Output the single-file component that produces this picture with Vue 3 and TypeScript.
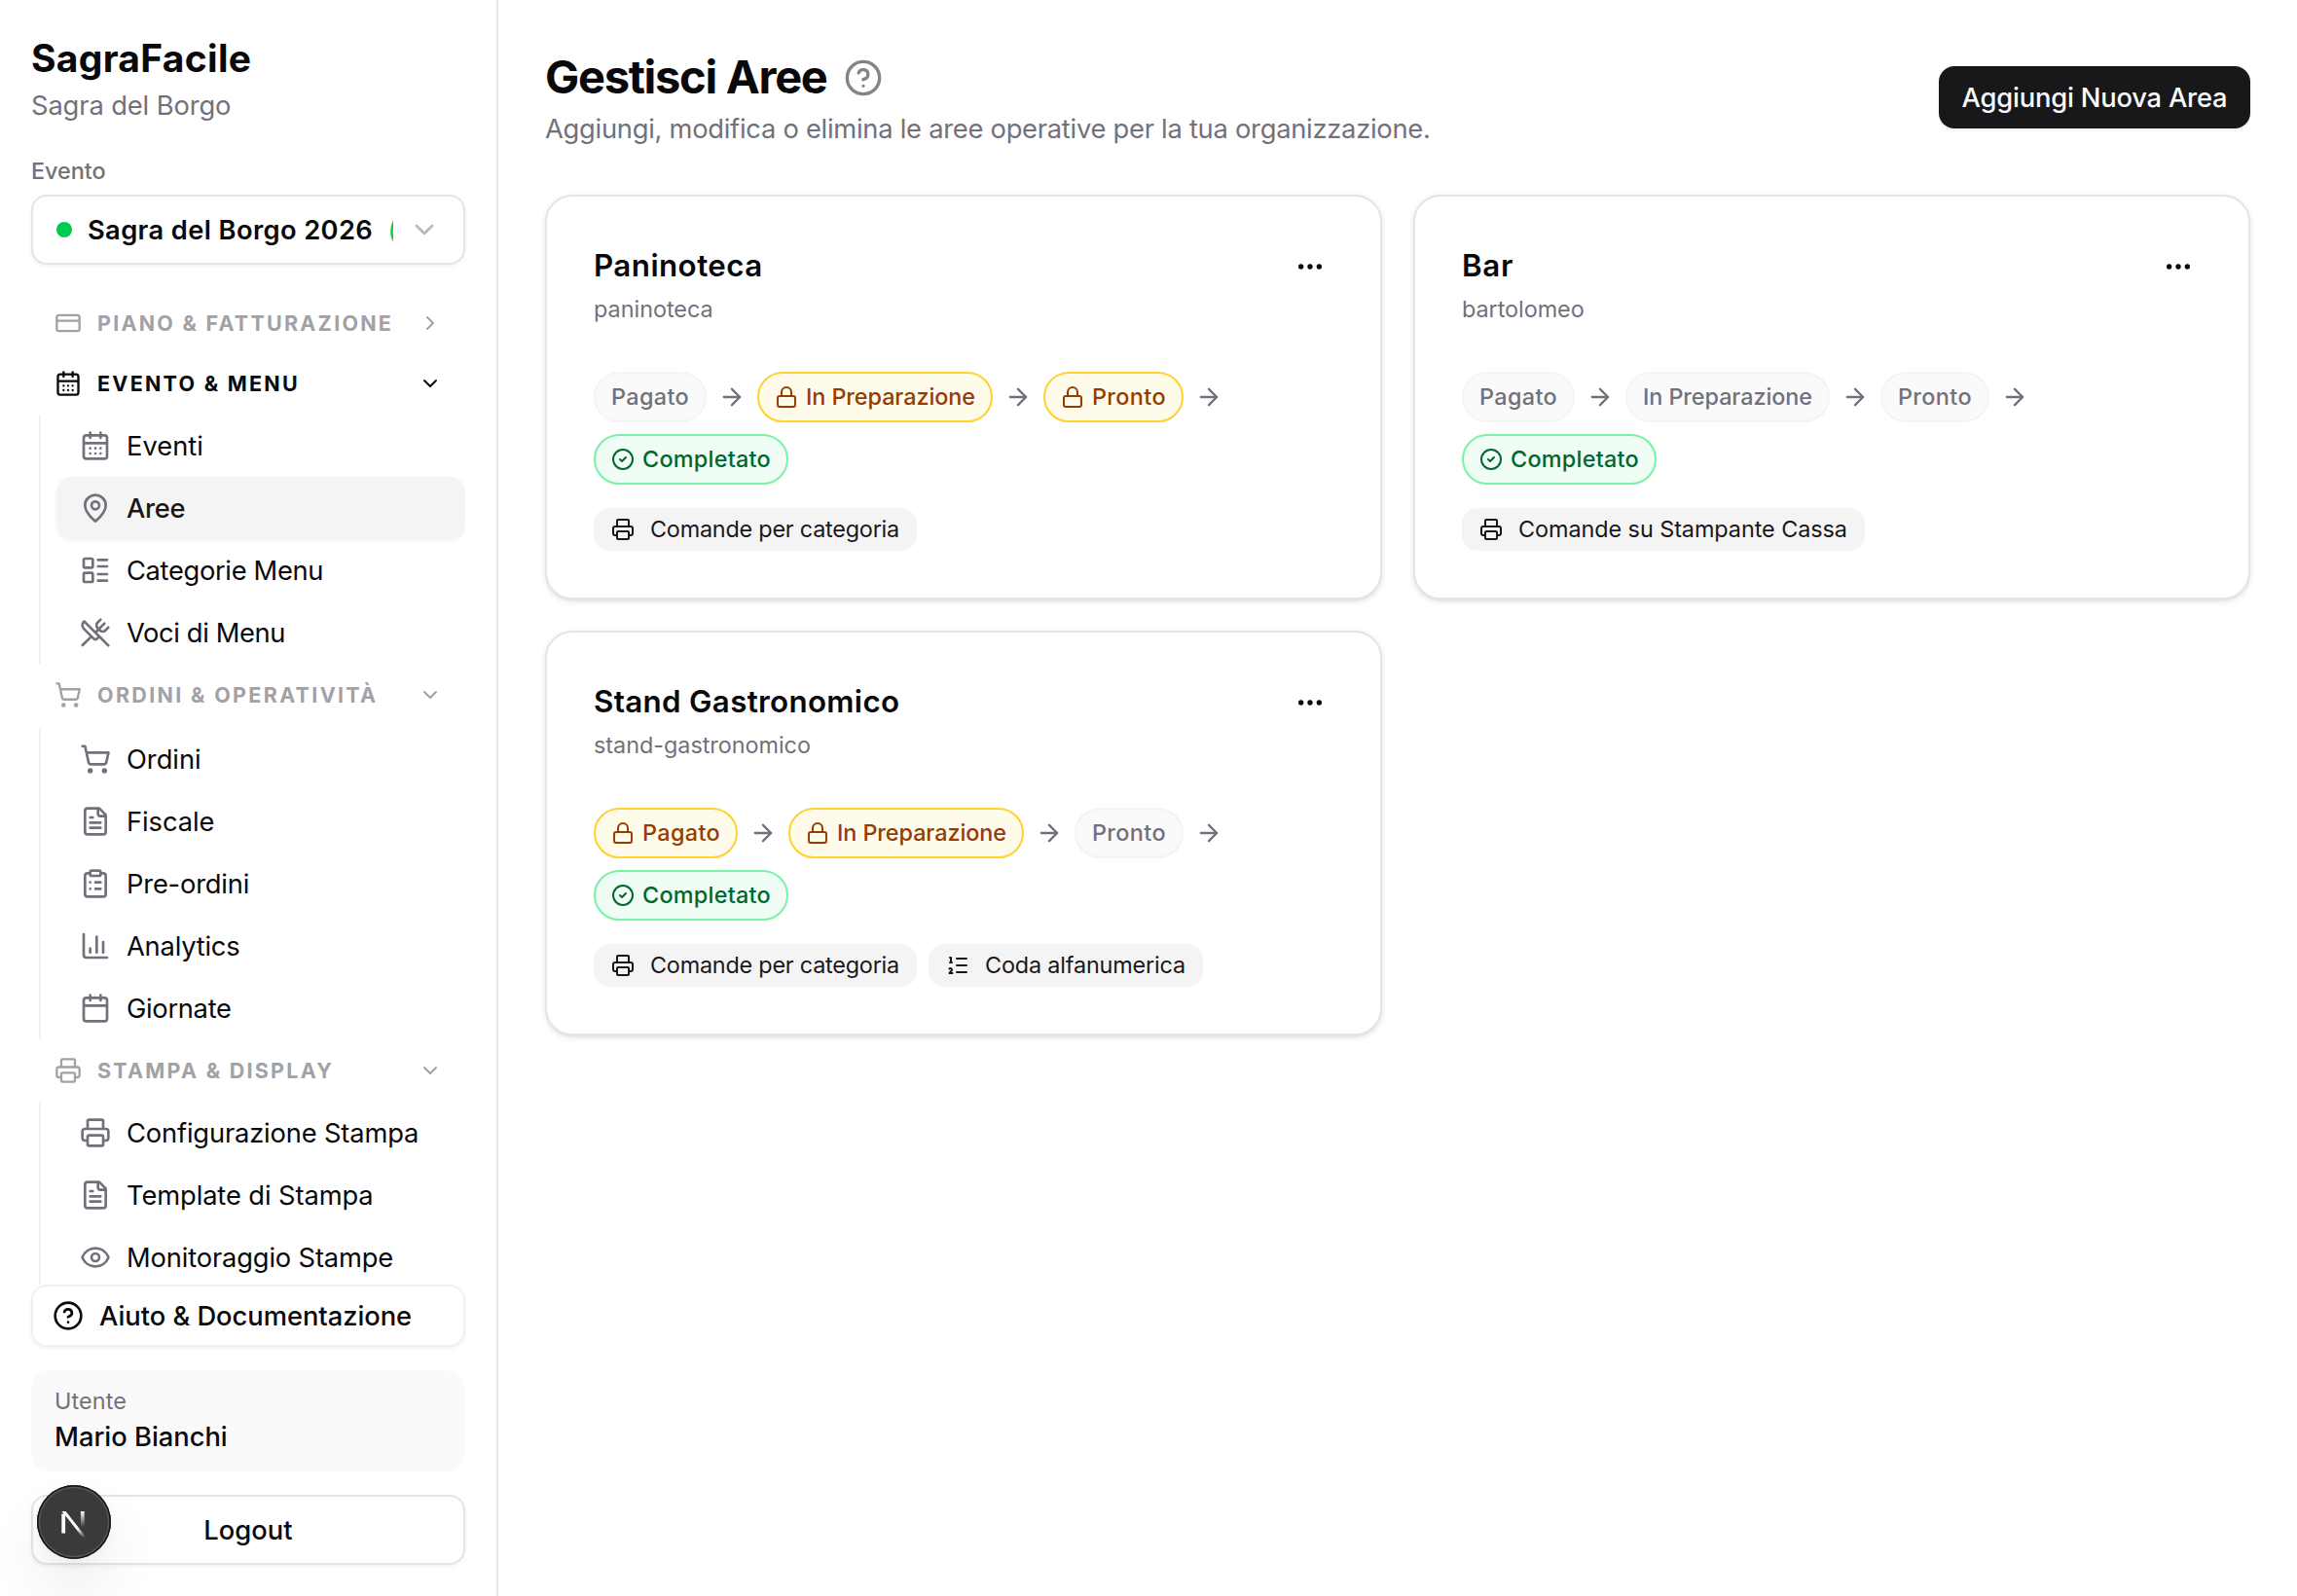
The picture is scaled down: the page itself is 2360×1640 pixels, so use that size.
<script setup lang="ts">
import { h } from 'vue'
import type { FunctionalComponent } from 'vue'

type IconName =
  | 'card' | 'calendarDays' | 'pin' | 'layout' | 'utensils' | 'cart' | 'file' | 'clipboard'
  | 'chart' | 'calendar' | 'printer' | 'eye' | 'help' | 'down' | 'right' | 'arrow'
  | 'lock' | 'check' | 'ordered' | 'more'

const cal = 'M8 2v4M16 2v4M5 4h14a2 2 0 0 1 2 2v14a2 2 0 0 1-2 2H5a2 2 0 0 1-2-2V6a2 2 0 0 1 2-2ZM3 10h18'
const ring = 'M2 12a10 10 0 1 0 20 0a10 10 0 1 0-20 0'

const paths: Record<IconName, string> = {
  card: 'M4 5h16a2 2 0 0 1 2 2v10a2 2 0 0 1-2 2H4a2 2 0 0 1-2-2V7a2 2 0 0 1 2-2ZM2 10h20',
  calendarDays: cal + 'M8 14h.01M12 14h.01M16 14h.01M8 18h.01M12 18h.01M16 18h.01',
  calendar: cal,
  pin: 'M20 10c0 4.993-5.539 10.193-7.399 11.799a1 1 0 0 1-1.202 0C9.539 20.193 4 14.993 4 10a8 8 0 0 1 16 0M9 10a3 3 0 1 0 6 0a3 3 0 1 0-6 0',
  layout: 'M4 3h5a1 1 0 0 1 1 1v5a1 1 0 0 1-1 1H4a1 1 0 0 1-1-1V4a1 1 0 0 1 1-1ZM4 14h5a1 1 0 0 1 1 1v5a1 1 0 0 1-1 1H4a1 1 0 0 1-1-1v-5a1 1 0 0 1 1-1ZM14 4h7M14 9h7M14 15h7M14 20h7',
  utensils: 'm16 2-2.3 2.3a3 3 0 0 0 0 4.2l1.8 1.8a3 3 0 0 0 4.2 0L22 8M15 15 3.3 3.3a4.2 4.2 0 0 0 0 6l7.3 7.3c.7.7 2 .7 2.8 0L15 15Zm0 0 7 7M2.1 21.8l6.4-6.3M19 5l-7 7',
  cart: 'M7 21a1 1 0 1 0 2 0a1 1 0 1 0-2 0M18 21a1 1 0 1 0 2 0a1 1 0 1 0-2 0M2.05 2.05h2l2.66 12.42a2 2 0 0 0 2 1.58h9.78a2 2 0 0 0 1.95-1.57l1.65-7.43H5.12',
  file: 'M15 2H6a2 2 0 0 0-2 2v16a2 2 0 0 0 2 2h12a2 2 0 0 0 2-2V7ZM14 2v4a2 2 0 0 0 2 2h4M10 9H8M16 13H8M16 17H8',
  clipboard: 'M9 2h6a1 1 0 0 1 1 1v2a1 1 0 0 1-1 1H9a1 1 0 0 1-1-1V3a1 1 0 0 1 1-1ZM16 4h2a2 2 0 0 1 2 2v14a2 2 0 0 1-2 2H6a2 2 0 0 1-2-2V6a2 2 0 0 1 2-2h2M12 11h4M12 16h4M8 11h.01M8 16h.01',
  chart: 'M3 3v16a2 2 0 0 0 2 2h16M18 17V9M13 17V5M8 17v-3',
  printer: 'M6 18H4a2 2 0 0 1-2-2v-5a2 2 0 0 1 2-2h16a2 2 0 0 1 2 2v5a2 2 0 0 1-2 2h-2M6 9V3a1 1 0 0 1 1-1h10a1 1 0 0 1 1 1v6M7 14h10a1 1 0 0 1 1 1v6a1 1 0 0 1-1 1H7a1 1 0 0 1-1-1v-6a1 1 0 0 1 1-1Z',
  eye: 'M2.062 12.348a1 1 0 0 1 0-.696 10.75 10.75 0 0 1 19.876 0 1 1 0 0 1 0 .696 10.75 10.75 0 0 1-19.876 0M9 12a3 3 0 1 0 6 0a3 3 0 1 0-6 0',
  help: ring + 'M9.09 9a3 3 0 0 1 5.83 1c0 2-3 3-3 3M12 17h.01',
  down: 'm6 9 6 6 6-6',
  right: 'm9 18 6-6-6-6',
  arrow: 'M5 12h14M12 5l7 7-7 7',
  lock: 'M5 11h14a2 2 0 0 1 2 2v7a2 2 0 0 1-2 2H5a2 2 0 0 1-2-2v-7a2 2 0 0 1 2-2ZM7 11V7a5 5 0 0 1 10 0v4',
  check: ring + 'M9 12l2 2 4-4',
  ordered: 'M11 5h10M11 12h10M11 19h10M4 4h1v5M4 9h2M6.5 20H3.4c0-1 2.6-1.925 2.6-3.5a1.5 1.5 0 0 0-2.6-1.02',
  more: 'M11 12a1 1 0 1 0 2 0a1 1 0 1 0-2 0M18 12a1 1 0 1 0 2 0a1 1 0 1 0-2 0M4 12a1 1 0 1 0 2 0a1 1 0 1 0-2 0',
}

const Icon: FunctionalComponent<{ name: IconName; size: number }> = (props) =>
  h('svg', {
    width: props.size, height: props.size, viewBox: '0 0 24 24', fill: 'none',
    stroke: 'currentColor', 'stroke-width': 2, 'stroke-linecap': 'round', 'stroke-linejoin': 'round',
    'aria-hidden': 'true',
  }, [h('path', { d: paths[props.name] })])
Icon.props = ['name', 'size']

interface Label { text: string; tracking: number }
interface NavItem extends Label { icon: IconName; active?: boolean }
interface NavGroup extends Label { key: string; icon: IconName; current?: boolean; items: NavItem[] }

const spacing = (l: Label) => ({ letterSpacing: `${l.tracking}px` })

const groups: NavGroup[] = [
  { key: 'piano', text: 'PIANO & FATTURAZIONE', tracking: 2.24, icon: 'card', items: [] },
  {
    key: 'evento', text: 'EVENTO & MENU', tracking: 2.26, icon: 'calendarDays', current: true,
    items: [
      { text: 'Eventi', tracking: 0.02, icon: 'calendarDays' },
      { text: 'Aree', tracking: -0.3, icon: 'pin', active: true },
      { text: 'Categorie Menu', tracking: -0.33, icon: 'layout' },
      { text: 'Voci di Menu', tracking: -0.38, icon: 'utensils' },
    ],
  },
  {
    key: 'ordini', text: 'ORDINI & OPERATIVITÀ', tracking: 2.32, icon: 'cart',
    items: [
      { text: 'Ordini', tracking: -0.03, icon: 'cart' },
      { text: 'Fiscale', tracking: -0.07, icon: 'file' },
      { text: 'Pre-ordini', tracking: -0.19, icon: 'clipboard' },
      { text: 'Analytics', tracking: -0.22, icon: 'chart' },
      { text: 'Giornate', tracking: -0.31, icon: 'calendar' },
    ],
  },
  {
    key: 'stampa', text: 'STAMPA & DISPLAY', tracking: 2.25, icon: 'printer',
    items: [
      { text: 'Configurazione Stampa', tracking: -0.16, icon: 'printer' },
      { text: 'Template di Stampa', tracking: -0.1, icon: 'file' },
      { text: 'Monitoraggio Stampe', tracking: -0.15, icon: 'eye' },
    ],
  },
]

type Tone = 'muted' | 'locked' | 'done'
interface Step extends Label { tone: Tone }
interface Tag extends Label { icon: IconName }
interface Area { name: Label; slug: Label; steps: Step[]; tags: Tag[] }

const pagato = (tone: Tone): Step => ({ text: 'Pagato', tracking: 0.36, tone })
const preparazione = (tone: Tone): Step => ({ text: 'In Preparazione', tracking: -0.08, tone })
const pronto = (tone: Tone): Step => ({ text: 'Pronto', tracking: 0.39, tone })
const completato: Step = { text: 'Completato', tracking: 0.26, tone: 'done' }
const perCategoria: Tag = { text: 'Comande per categoria', tracking: -0.22, icon: 'printer' }

const areas: Area[] = [
  {
    name: { text: 'Paninoteca', tracking: 0.45 }, slug: { text: 'paninoteca', tracking: -0.01 },
    steps: [pagato('muted'), preparazione('locked'), pronto('locked'), completato],
    tags: [perCategoria],
  },
  {
    name: { text: 'Bar', tracking: 0.7 }, slug: { text: 'bartolomeo', tracking: -0.05 },
    steps: [pagato('muted'), preparazione('muted'), pronto('muted'), completato],
    tags: [{ text: 'Comande su Stampante Cassa', tracking: -0.06, icon: 'printer' }],
  },
  {
    name: { text: 'Stand Gastronomico', tracking: 0.33 }, slug: { text: 'stand-gastronomico', tracking: -0.03 },
    steps: [pagato('locked'), preparazione('locked'), pronto('muted'), completato],
    tags: [perCategoria, { text: 'Coda alfanumerica', tracking: -0.16, icon: 'ordered' }],
  },
]
</script>

<template>
  <div class="app">
    <aside class="sidebar">
      <div class="brand">SagraFacile</div>
      <div class="org">Sagra del Borgo</div>
      <div class="event-label">Evento</div>
      <button class="select" type="button">
        <span class="select-value">
          <span class="dot"></span>
          <span class="select-text">Sagra del Borgo 2026</span>
          <span class="select-state">(</span>
        </span>
        <Icon class="select-chevron" name="down" :size="32" />
      </button>

      <nav class="nav">
        <section v-for="g in groups" :key="g.key" :class="['group', `group-${g.key}`]">
          <div :class="['group-head', { current: g.current }]">
            <Icon :name="g.icon" :size="28" />
            <span class="group-title" :style="spacing(g)">{{ g.text }}</span>
            <Icon class="group-chevron" :name="g.items.length ? 'down' : 'right'" :size="24" />
          </div>
          <div v-if="g.items.length" class="group-items">
            <a v-for="item in g.items" :key="item.text" :class="['item', { active: item.active }]">
              <Icon class="item-icon" :name="item.icon" :size="32" />
              <span class="item-text" :style="spacing(item)">{{ item.text }}</span>
            </a>
          </div>
        </section>
      </nav>

      <a class="help-link">
        <Icon name="help" :size="32" />
        <span class="item-text">Aiuto &amp; Documentazione</span>
      </a>
      <div class="user">
        <div class="user-label">Utente</div>
        <div class="user-name">Mario Bianchi</div>
      </div>
      <button class="logout" type="button">Logout</button>
    </aside>

    <main class="main">
      <header class="header">
        <div>
          <div class="title-row">
            <h1>Gestisci Aree</h1>
            <Icon class="title-help" name="help" :size="40" />
          </div>
          <p class="lead">Aggiungi, modifica o elimina le aree operative per la tua organizzazione.</p>
        </div>
        <button class="primary" type="button">Aggiungi Nuova Area</button>
      </header>

      <div class="cards">
        <article v-for="a in areas" :key="a.slug.text" class="card">
          <div class="card-head">
            <div>
              <h2 :style="spacing(a.name)">{{ a.name.text }}</h2>
              <div class="slug" :style="spacing(a.slug)">{{ a.slug.text }}</div>
            </div>
            <span class="more"><Icon name="more" :size="32" /></span>
          </div>
          <div class="steps">
            <template v-for="(s, i) in a.steps" :key="s.text">
              <Icon v-if="i > 0" class="step-arrow" name="arrow" :size="28" />
              <span :class="['step', s.tone]">
                <Icon v-if="s.tone === 'locked'" name="lock" :size="24" />
                <Icon v-if="s.tone === 'done'" name="check" :size="24" />
                <span :style="spacing(s)">{{ s.text }}</span>
              </span>
            </template>
          </div>
          <div class="tags">
            <span v-for="t in a.tags" :key="t.text" class="tag">
              <Icon :name="t.icon" :size="24" />
              <span :style="spacing(t)">{{ t.text }}</span>
            </span>
          </div>
        </article>
      </div>
    </main>

    <div class="dev-badge">
      <svg width="76" height="76" viewBox="0 0 76 76" fill="none" aria-hidden="true">
        <defs>
          <linearGradient id="diag" x1="38" y1="40" x2="49" y2="54" gradientUnits="userSpaceOnUse">
            <stop offset="0.3" stop-color="#fff" />
            <stop offset="1" stop-color="#fff" stop-opacity="0" />
          </linearGradient>
          <linearGradient id="stem" x1="47" y1="27" x2="47" y2="43" gradientUnits="userSpaceOnUse">
            <stop stop-color="#fff" />
            <stop offset="1" stop-color="#fff" stop-opacity="0" />
          </linearGradient>
        </defs>
        <path d="M27.2 49.5V29.5" stroke="#fff" stroke-width="3.8" />
        <path d="M25.3 27H29.6L50 53L47.6 54.8L28.9 31Z" fill="url(#diag)" />
        <path d="M46.8 27V43" stroke="url(#stem)" stroke-width="3.8" />
      </svg>
    </div>
  </div>
</template>

<style>
body {
  background: #fff;
}
</style>

<style scoped>
.app {
  position: relative;
  display: flex;
  width: 2360px;
  height: 1640px;
  overflow: hidden;
  background: #fff;
  color: #09090b;
  font-family: Inter, "Liberation Sans", sans-serif;
  font-size: 27.3px;
  line-height: 40px;
}
.app *,
.app *::before {
  box-sizing: border-box;
}
svg {
  display: block;
  flex: none;
}
button {
  font: inherit;
  color: inherit;
  margin: 0;
}
h1,
h2,
p {
  margin: 0;
}
span,
.brand,
.org,
h1,
h2,
.lead {
  white-space: nowrap;
}

.sidebar {
  display: flex;
  flex-direction: column;
  flex: none;
  width: 512px;
  padding: 32px;
  border-right: 2px solid #e4e4e7;
}
.brand {
  font-size: 39px;
  line-height: 56px;
  font-weight: 700;
  letter-spacing: 0.3px;
}
.org {
  margin-top: 1px;
  color: #71717b;
  letter-spacing: -0.11px;
}
.event-label {
  margin: 31px 0 8px;
  font-size: 23.4px;
  line-height: 32px;
  font-weight: 500;
  letter-spacing: -0.05px;
  color: #71717b;
}
.select {
  display: flex;
  align-items: center;
  justify-content: space-between;
  flex: none;
  height: 72px;
  padding: 0 24px;
  border: 2px solid #e4e4e7;
  border-radius: 16px;
  background: #fff;
  box-shadow: 0 2px 4px rgba(0, 0, 0, 0.05);
}
.select-value {
  display: flex;
  align-items: center;
  width: 346px;
  overflow: hidden;
}
.dot {
  flex: none;
  width: 16px;
  height: 16px;
  margin-right: 16px;
  border-radius: 50%;
  background: #00c950;
}
.select-text {
  padding-top: 2px;
  font-weight: 600;
  letter-spacing: 0.37px;
}
.select-state {
  margin-left: 15px;
  padding-top: 2px;
  color: #00c950;
}
.select-chevron {
  color: #71717b;
  opacity: 0.5;
}

.nav {
  flex: 1;
  min-height: 0;
  margin-top: 28px;
  overflow: hidden;
}
.group-head {
  display: flex;
  align-items: center;
  height: 64px;
  padding: 0 24px;
  color: #a1a1a6;
}
.group-head.current {
  color: #09090b;
}
.group-piano .group-head {
  height: 62px;
  padding-top: 2px;
}
.group-ordini .group-head {
  margin-bottom: 2px;
}
.group-title {
  flex: 1;
  margin-left: 16px;
  font-size: 21.5px;
  font-weight: 700;
}
.group-items {
  margin-left: 8px;
  padding-left: 16px;
  border-left: 2px solid #f1f1f2;
}
.item {
  display: flex;
  align-items: center;
  gap: 16px;
  height: 64px;
  padding: 0 24px;
  border-radius: 16px;
}
.item.active {
  background: #f4f4f5;
  color: #18181b;
  font-weight: 500;
  box-shadow: 0 2px 4px rgba(0, 0, 0, 0.05);
}
.item-icon {
  color: #71717b;
}
.item-text {
  padding-top: 2px;
}

.help-link {
  display: flex;
  align-items: center;
  flex: none;
  gap: 16px;
  height: 64px;
  padding: 0 20px;
  border: 2px solid #f0f0f1;
  border-radius: 16px;
  background: #fff;
  box-shadow: 0 2px 4px rgba(0, 0, 0, 0.05);
  font-weight: 500;
  letter-spacing: -0.03px;
}
.user {
  flex: none;
  height: 104px;
  margin: 24px 0;
  padding: 16px 24px;
  border-radius: 20px;
  background: #fafafa;
}
.user-label {
  font-size: 23.4px;
  line-height: 32px;
  letter-spacing: 0.12px;
  color: #71717b;
}
.user-name {
  margin-top: 1px;
  font-weight: 500;
}
.logout {
  flex: none;
  height: 72px;
  padding: 2px 0 0;
  border: 2px solid #e4e4e7;
  border-radius: 16px;
  background: #fff;
  box-shadow: 0 2px 4px rgba(0, 0, 0, 0.05);
  font-weight: 500;
  letter-spacing: 0.05px;
}

.main {
  flex: 1;
  padding: 48px;
}
.header {
  display: flex;
  align-items: center;
  justify-content: space-between;
  height: 104px;
}
.title-row {
  display: flex;
  align-items: center;
  gap: 17px;
  height: 64px;
}
h1 {
  font-size: 47px;
  line-height: 62px;
  font-weight: 700;
  letter-spacing: -1.3px;
  margin-bottom: 2px;
}
.title-help {
  color: #838388;
}
.lead {
  height: 40px;
  padding-top: 1px;
  color: #71717b;
  letter-spacing: -0.255px;
}
.primary {
  width: 320px;
  height: 64px;
  padding: 2px 0 0;
  border: 0;
  border-radius: 16px;
  background: #18181b;
  color: #fafafa;
  box-shadow: 0 2px 4px rgba(0, 0, 0, 0.05);
  font-weight: 500;
  letter-spacing: -0.18px;
}

.cards {
  display: grid;
  grid-template-columns: 1fr 1fr;
  gap: 32px;
  margin-top: 48px;
}
.card {
  height: 416px;
  padding: 48px;
  border: 2px solid #e4e4e7;
  border-radius: 28px;
  background: #fff;
  box-shadow: 0 2px 6px rgba(0, 0, 0, 0.1), 0 2px 4px -2px rgba(0, 0, 0, 0.1);
}
.card-head {
  display: flex;
  justify-content: space-between;
  height: 84px;
}
h2 {
  padding-top: 1px;
  font-size: 31.3px;
  line-height: 44px;
  font-weight: 600;
}
.slug {
  margin-top: 7px;
  font-size: 23.4px;
  line-height: 32px;
  color: #71717b;
}
.more {
  display: flex;
  align-items: center;
  justify-content: center;
  width: 48px;
  height: 48px;
}
.steps {
  display: flex;
  flex-wrap: wrap;
  align-items: center;
  gap: 12px;
  margin-top: 48px;
}
.step-arrow {
  color: #71717b;
}
.step {
  display: flex;
  align-items: center;
  gap: 8px;
  height: 52px;
  padding: 0 16px;
  border: 2px solid;
  border-radius: 26px;
  font-size: 23.4px;
  font-weight: 500;
}
.step.muted {
  border-color: #f4f4f5;
  background: #fafafa;
  color: #71717b;
}
.step.locked {
  border-color: #ffd230;
  background: #fffbeb;
  color: #973c00;
}
.step.done {
  border-color: #7bf1a8;
  background: #f0fdf4;
  color: #016630;
}
.tags {
  display: flex;
  gap: 12px;
  margin-top: 24px;
}
.tag {
  display: flex;
  align-items: center;
  gap: 16px;
  height: 44px;
  padding: 0 18px;
  border-radius: 16px;
  background: #f4f4f5;
  color: #18181b;
  font-size: 23.4px;
}

.dev-badge {
  position: absolute;
  left: 38px;
  top: 1526px;
  width: 76px;
  height: 76px;
  border-radius: 50%;
  background: #3a3a3a;
  box-shadow: inset 0 0 0 1.5px #141414, inset 0 0 0 3px #555, 0 32px 64px -8px rgba(0, 0, 0, 0.12), 0 4px 12px rgba(0, 0, 0, 0.04);
}
</style>
